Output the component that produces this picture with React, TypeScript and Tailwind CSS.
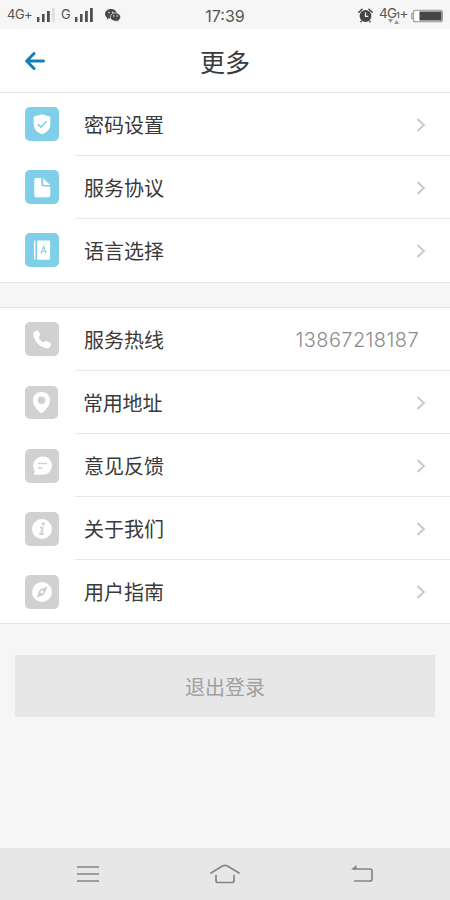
import type { ReactNode } from "react";

const cjk = "font-['Noto_Sans_CJK_SC','Noto_Sans',sans-serif]";

function Signal({ weak = false }: { weak?: boolean }) {
  return (
    <svg width="18" height="14" viewBox="0 0 18 14" fill="#505050">
      <rect x="0" y="9" width="2.4" height="5" />
      <rect x="5" y="6" width="2.6" height="8" />
      <rect x="10" y="3" width="2.8" height="11" />
      <rect x="15" y="0" width="2.8" height="14" fill={weak ? "#dfdfdf" : "#505050"} />
    </svg>
  );
}

function WeChat() {
  return (
    <svg width="16" height="13" viewBox="0 0 16 13">
      <path d="M6 0C2.6 0 0 2.2 0 4.9c0 1.5.8 2.8 2.1 3.7L1.6 10.4l2.2-1.1c.7.2 1.4.3 2.2.3 3.4 0 6-2.1 6-4.7S9.400 0 6 0Z" fill="#484848" />
      <path d="M10.500 3.900c-3 0-5.200 1.900-5.200 4.200 0 2.400 2.200 4.200 5.200 4.200.6 0 1.200-.1 1.700-.3l2 1-.5-1.700c1.100-.8 1.900-1.900 1.900-3.200 0-2.300-2.200-4.200-5.100-4.200Z" fill="#484848" stroke="#f7f7f7" strokeWidth=".7" />
      <g fill="#f7f7f7">
        <circle cx="4" cy="3.500" r=".75" />
        <circle cx="7.800" cy="3.200" r=".75" />
        <circle cx="8.800" cy="7" r=".7" />
        <circle cx="12.100" cy="7" r=".7" />
      </g>
    </svg>
  );
}

function Alarm() {
  return (
    <svg width="15" height="15" viewBox="0 0 15 15">
      <path d="M.9 4.300 4 1.300M14.100 4.300 11 1.300" stroke="#464646" strokeWidth="1.600" strokeLinecap="round" />
      <circle cx="7.500" cy="8" r="5.900" fill="#464646" />
      <path d="M7.500 4.600V8.300H10.300" stroke="#f7f7f7" strokeWidth="1.200" fill="none" />
      <path d="m3.500 13-1 1.300M11.500 13l1 1.300" stroke="#464646" strokeWidth="1.400" />
    </svg>
  );
}

function Battery() {
  return (
    <svg width="32" height="14" viewBox="0 0 32 14">
      <path d="M2 4.500H.7v5H2" stroke="#909090" fill="none" />
      <rect x="2.300" y="1.300" width="29" height="11.400" rx="2" fill="#fdfdfd" stroke="#909090" strokeWidth="1.100" />
      <rect x="8.500" y="2.500" width="22" height="9" fill="#454545" />
    </svg>
  );
}

const shield = (
  <>
    <path d="M17 7.200 24.700 9.600Q25.300 9.800 25.300 10.500V17C25.300 22 22.400 25.200 17 27.300 11.600 25.200 8.700 22 8.700 17V10.500Q8.700 9.800 9.300 9.600Z" fill="#fff" />
    <path d="m12.800 17.100 3 3 5.800-5.900" stroke="#7fcfe9" strokeWidth="1.500" fill="none" />
  </>
);
const doc = (
  <>
    <path d="M11 8H16.300V14.300Q16.300 16.500 18.500 16.500H25.300V25.500Q25.300 27.200 23.600 27.200H11Q9.300 27.200 9.300 25.500V9.700Q9.300 8 11 8Z" fill="#fff" />
    <path d="M18.200 8.300 25 15.100H19.200Q18.200 15.100 18.200 14.100Z" fill="#fff" />
  </>
);
const book = (
  <>
    <path d="M9 8.600Q9 7.400 10.400 7.400V26.800Q9 26.800 9 25.600Z" fill="#fff" />
    <rect x="12.100" y="7.400" width="13" height="19.400" rx="1.200" fill="#fff" />
    <path d="m15.900 20.500 2.700-7 2.700 7M16.900 18.300h3.500" stroke="#7fcfe9" strokeWidth="1.100" fill="none" />
  </>
);
const phone = (
  <path d="M9.600 9.400 11.600 8.500Q12.700 8.100 13.300 9.200L15 12.100Q15.500 13.100 14.700 13.900L13.500 15.200C14.500 17.600 16.200 19.300 18.700 20.600L20.100 19.300Q20.900 18.500 21.900 19.100L25.300 21Q26.300 21.600 25.900 22.700L25 25Q24.500 26.200 23.300 26.300C16 26.700 8.200 19.500 8.300 11.300Q8.400 10 9.600 9.400Z" fill="#fff" />
);
const pin = (
  <path fillRule="evenodd" d="M17 6.300C11.800 6.300 8.200 9.800 8.200 14.600 8.200 20 12.500 24.400 16.200 27.700Q17 28.400 17.800 27.700C21.500 24.400 25.800 20 25.800 14.600 25.800 9.800 22.200 6.300 17 6.300Zm0 4.500a3.900 3.900 0 1 1 0 7.800 3.900 3.900 0 0 1 0-7.800Z" fill="#fff" />
);
const chat = (
  <>
    <path d="M17.700 7.500c5.300 0 9.300 4 9.300 9s-4 9.300-9.300 9.300H9.200Q8.300 25.800 8.800 25L10 22.700C8.800 21 8.300 19 8.300 16.700 8.300 11.600 12.400 7.500 17.700 7.500Z" fill="#fff" />
    <path d="M13 14.500h9.200M13 19h4.400" stroke="#d1d1d1" strokeWidth="1.600" />
  </>
);
const info = (
  <>
    <circle cx="17" cy="17" r="10" fill="#fff" />
    <circle cx="18.300" cy="11.800" r="1.600" fill="#d1d1d1" />
    <path d="M15 15.500h2.700l-1.600 6.500h2.700M14.200 22h3" stroke="#d1d1d1" strokeWidth="2" fill="none" />
  </>
);
const compass = (
  <>
    <circle cx="17" cy="17" r="10" fill="#fff" />
    <path fillRule="evenodd" d="M22.500 11.300 19.900 18.400 18 20.200 11.700 22.700 13.800 16 15.800 14ZM17 15.700a1.400 1.400 0 1 0 0 2.800 1.400 1.400 0 0 0 0-2.800Z" fill="#d1d1d1" />
  </>
);

type RowProps = {
  icon: ReactNode;
  label: string;
  blue?: boolean;
  small?: boolean;
  low?: boolean;
  detail?: string;
  last?: boolean;
};

function Row({ icon, label, blue, small, low, detail, last }: RowProps) {
  return (
    <div className={`flex ${last ? "h-[64px]" : "h-[63px]"}`}>
      <div className={`flex w-[75px] shrink-0 items-start pl-[25px] ${low ? "pt-[15px]" : "pt-[14px]"} ${last ? "border-b border-[#e3e3e3]" : ""}`}>
        <svg className={small ? "size-[33px]" : "size-[34px]"} viewBox="0 0 34 34">
          <rect width="34" height="34" rx="5" fill={blue ? "#7fcfe9" : "#d1d1d1"} />
          {icon}
        </svg>
      </div>
      <div className={`flex flex-1 items-start justify-between border-b pl-[9px] ${last ? "border-[#e3e3e3]" : "border-[#e8e8e8]"}`}>
        <span className={`pt-[17px] text-[20px] leading-[30px] text-[#3a3a3a] ${small ? "-ml-px tracking-[-0.2px]" : ""}`}>{label}</span>
        {detail ? (
          <span className="mr-[31px] pt-[17px] font-[Inter,sans-serif] text-[20px] font-light leading-[30px] tracking-[0.4px] text-[#8c8c8c]">{detail}</span>
        ) : (
          <svg className={`mr-6 ${low ? "mt-[25px]" : "mt-[24.5px]"}`} width="10" height="14" viewBox="0 0 10 14" fill="none" stroke="#c9c9cc" strokeWidth="2">
            <path d="m1.500 1 6.300 6-6.300 6" />
          </svg>
        )}
      </div>
    </div>
  );
}

export default function App() {
  return (
    <div className={`flex h-[900px] w-[450px] flex-col overflow-hidden bg-[#f6f6f6] ${cjk}`}>
      <div className="grid h-[29px] shrink-0 grid-cols-3 items-center bg-[#f6f6f6] pt-[2px] font-[Inter,sans-serif] text-[#555]">
        <div className="-mt-px flex items-center pl-[7px] text-[13px]">
          <span className="w-[30px] tracking-[-0.5px]">4G+</span>
          <Signal weak />
          <span className="ml-[6px] w-[14px]">G</span>
          <Signal />
          <span className="ml-[12px]"><WeChat /></span>
        </div>
        <div className="text-center text-[16px]">17:39</div>
        <div className="flex items-center justify-end pr-[7px]">
          <Alarm />
          <div className="relative ml-[6px] mr-px -mt-[5px] flex h-[18px] w-[31px] items-baseline text-[13.5px] leading-[18px]">
            <span className="tracking-[-0.8px]">4G</span>
            <span className="text-[8px] font-semibold">1</span>
            <span>+</span>
            <svg className="absolute left-[9px] top-[15px]" width="12" height="5" viewBox="0 0 12 5" fill="#999">
              <path d="M0 0h5L2.500 4ZM6 5h5L8.500 1Z" />
            </svg>
          </div>
          <Battery />
        </div>
      </div>
      <header className="grid h-16 shrink-0 grid-cols-[75px_1fr_75px] items-center border-b border-[#e6e6e6] bg-white">
        <svg className="ml-[25px]" width="20" height="20" viewBox="0 0 20 20" fill="none" stroke="#147fb5" strokeWidth="3" strokeLinecap="round" strokeLinejoin="round">
          <path d="M9 2.500 1.700 10 9 17.500M1.700 10H18.500" />
        </svg>
        <h1 className="text-center text-[25px] leading-9 text-[#3a3a3a]">更多</h1>
      </header>
      <section className="shrink-0 bg-white">
        <Row blue icon={shield} label="密码设置" />
        <Row blue icon={doc} label="服务协议" />
        <Row blue icon={book} label="语言选择" last />
      </section>
      <section className="mt-6 shrink-0 border-t border-[#e3e3e3] bg-white">
        <Row icon={phone} label="服务热线" detail="13867218187" />
        <Row icon={pin} label="常用地址" small low />
        <Row icon={chat} label="意见反馈" low />
        <Row icon={info} label="关于我们" low />
        <Row icon={compass} label="用户指南" low last />
      </section>
      <button className="mx-[15px] mt-[31px] h-[62px] shrink-0 bg-[#e7e7e7] pt-[2px] text-[20px] text-[#a0a0a0]">退出登录</button>
      <nav className="mt-auto flex h-[52px] shrink-0 items-center justify-between bg-[#e7e7e7] pl-[77px] pr-[77px]">
        <svg width="22" height="18" viewBox="0 0 22 18" stroke="#858585" strokeWidth="1.700">
          <path d="M0 2h22M0 9h22M0 16h22" />
        </svg>
        <svg width="30" height="20" viewBox="0 0 30 20" fill="none" stroke="#858585" strokeWidth="1.700" strokeLinecap="round" strokeLinejoin="round">
          <path d="M1 9 12.500 2Q15 .6 17.500 2L29 9M6 11.500V16.500Q6 18.500 8 18.500H22Q24 18.500 24 16.500V11.500" />
        </svg>
        <svg width="22" height="18" viewBox="0 0 22 18" fill="none" stroke="#858585" strokeWidth="1.700" strokeLinejoin="round">
          <path d="M2 4H19Q21 4 21 6V14Q21 16 19 16H3" />
          <path d="M0 4.500 5.500 0V4.500Z" fill="#858585" stroke="none" />
        </svg>
      </nav>
    </div>
  );
}
